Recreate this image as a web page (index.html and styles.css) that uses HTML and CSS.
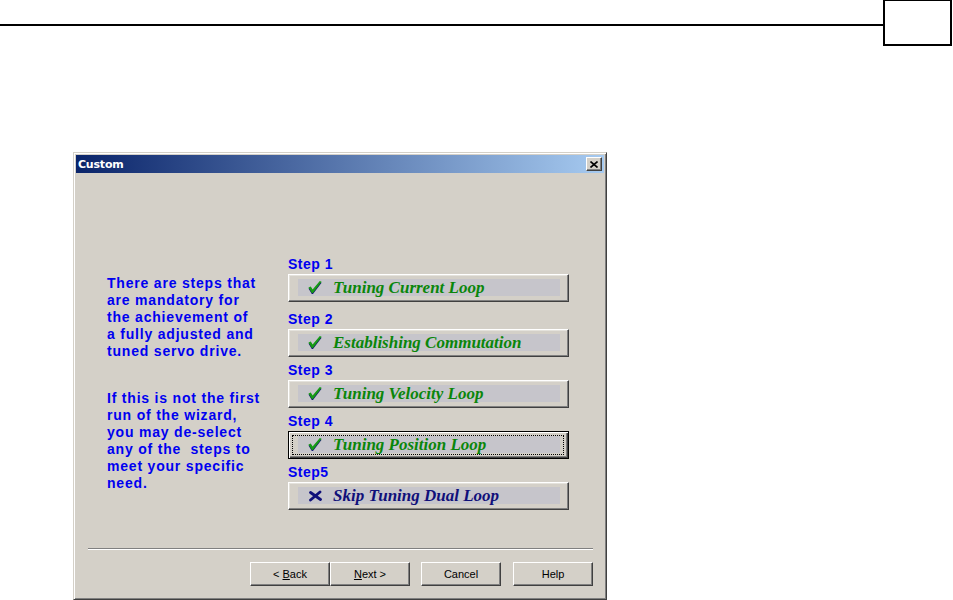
FILE: index.html
```html
<!DOCTYPE html>
<html lang="en">
<head>
    <meta charset="UTF-8">
    <title>Custom</title>
    <link rel="stylesheet" href="styles.css">
</head>
<body>
    <div class="page-head">
        <div class="rule"></div>
        <div class="page-box"></div>
    </div>

    <div class="dialog">
        <div class="titlebar">
            <span class="title">Custom</span>
            <span class="close-btn">
                <svg width="8" height="7" viewBox="0 0 8 7"><path d="M0.5 0.5 L7.5 6.5 M7.5 0.5 L0.5 6.5" stroke="#000" stroke-width="1.6"/></svg>
            </span>
        </div>

        <div class="dialog-body">
            <div class="intro">
                <p>There are steps that<br>are mandatory for<br>the achievement of<br>a fully adjusted and<br>tuned servo drive.</p>
                <p>If this is not the first<br>run of the wizard,<br>you may de-select<br>any of the &nbsp;steps to<br>meet your specific<br>need.</p>
            </div>

            <div class="steps">
                <div class="step">
                    <div class="step-label">Step 1</div>
                    <div class="step-btn">
                        <div class="step-face">
                            <svg class="check" width="14" height="13" viewBox="0 0 14 13"><path d="M0.5 7.5 L2.8 6.6 L4.6 9.4 L11.8 1 L13.6 1.8 L5 13 L3.8 13 Z" fill="#101870"/><path d="M0.5 6.5 L2.8 5.6 L4.6 8.4 L11.8 0 L13.6 0.8 L5 12 L3.8 12 Z" fill="#169a16"/></svg>
                            <span>Tuning Current Loop</span>
                        </div>
                    </div>
                </div>
                <div class="step">
                    <div class="step-label">Step 2</div>
                    <div class="step-btn">
                        <div class="step-face">
                            <svg class="check" width="14" height="13" viewBox="0 0 14 13"><path d="M0.5 7.5 L2.8 6.6 L4.6 9.4 L11.8 1 L13.6 1.8 L5 13 L3.8 13 Z" fill="#101870"/><path d="M0.5 6.5 L2.8 5.6 L4.6 8.4 L11.8 0 L13.6 0.8 L5 12 L3.8 12 Z" fill="#169a16"/></svg>
                            <span>Establishing Commutation</span>
                        </div>
                    </div>
                </div>
                <div class="step">
                    <div class="step-label">Step 3</div>
                    <div class="step-btn">
                        <div class="step-face">
                            <svg class="check" width="14" height="13" viewBox="0 0 14 13"><path d="M0.5 7.5 L2.8 6.6 L4.6 9.4 L11.8 1 L13.6 1.8 L5 13 L3.8 13 Z" fill="#101870"/><path d="M0.5 6.5 L2.8 5.6 L4.6 8.4 L11.8 0 L13.6 0.8 L5 12 L3.8 12 Z" fill="#169a16"/></svg>
                            <span>Tuning Velocity Loop</span>
                        </div>
                    </div>
                </div>
                <div class="step">
                    <div class="step-label">Step 4</div>
                    <div class="step-btn focused">
                        <div class="step-face">
                            <svg class="check" width="14" height="13" viewBox="0 0 14 13"><path d="M0.5 7.5 L2.8 6.6 L4.6 9.4 L11.8 1 L13.6 1.8 L5 13 L3.8 13 Z" fill="#101870"/><path d="M0.5 6.5 L2.8 5.6 L4.6 8.4 L11.8 0 L13.6 0.8 L5 12 L3.8 12 Z" fill="#169a16"/></svg>
                            <span>Tuning Position Loop</span>
                        </div>
                    </div>
                </div>
                <div class="step">
                    <div class="step-label">Step5</div>
                    <div class="step-btn">
                        <div class="step-face skip">
                            <svg class="check" width="14" height="13" viewBox="0 0 14 13"><path d="M2.5 3.5 L12.5 10.5 M12 3 L2.5 11" stroke="#10107a" stroke-width="2.8" stroke-linecap="round"/></svg>
                            <span>Skip Tuning Dual Loop</span>
                        </div>
                    </div>
                </div>
            </div>
        </div>

        <div class="separator"></div>

        <div class="actions">
            <button class="win-btn">&lt; <u>B</u>ack</button>
            <button class="win-btn"><u>N</u>ext &gt;</button>
            <button class="win-btn spaced">Cancel</button>
            <button class="win-btn spaced-wide">Help</button>
        </div>
    </div>
</body>
</html>
```

FILE: styles.css
```css
body {
    margin: 0;
    background: #fff;
    font-family: "Liberation Sans", Arial, sans-serif;
}
.page-head {
    display: flex;
    height: 46px;
}
.rule {
    flex: 1;
    height: 2px;
    margin-top: 24px;
    background: #000;
}
.page-box {
    width: 65px;
    height: 43px;
    margin-right: 1px;
    border: 2px solid #000;
    border-top-width: 1px;
}
.dialog {
    width: 534px;
    height: 448px;
    margin: 106px 0 0 73px;
    box-sizing: border-box;
    padding: 2px;
    background: #d4d0c8;
    border: 1px solid;
    border-color: #d4d0c8 #404040 #404040 #d4d0c8;
    box-shadow: inset 1px 1px #fff, inset -1px -1px #808080;
}
.titlebar {
    height: 18px;
    display: flex;
    align-items: center;
    justify-content: space-between;
    padding: 0 2px 0 2px;
    background: linear-gradient(to right, #0a246a, #a6caf0);
}
.title {
    color: #fff;
    font-family: "DejaVu Sans", sans-serif;
    font-weight: bold;
    font-size: 11px;
    letter-spacing: -0.2px;
}
.close-btn {
    width: 16px;
    height: 14px;
    box-sizing: border-box;
    display: flex;
    align-items: center;
    justify-content: center;
    background: #d4d0c8;
    border: 1px solid;
    border-color: #fff #404040 #404040 #fff;
    box-shadow: inset -1px -1px #808080;
}
.dialog-body {
    display: flex;
    padding: 83px 0 0 31px;
}
.intro {
    width: 181px;
    padding-top: 19px;
    color: #0000f0;
    font-weight: bold;
    font-size: 14px;
    line-height: 17px;
    letter-spacing: 0.8px;
}
.intro p {
    margin: 0 0 30px 0;
}
.intro p:last-child {
    margin-bottom: 0;
}
.steps {
    width: 281px;
}
.step {
    margin-bottom: 5px;
}
.step:first-child {
    margin-bottom: 9px;
}
.step-label {
    color: #0000f0;
    font-weight: bold;
    font-size: 14px;
    line-height: 17px;
    letter-spacing: 0.5px;
    margin-bottom: 1px;
}
.step-btn {
    position: relative;
    height: 28px;
    box-sizing: border-box;
    padding: 4px 8px 5px 9px;
    border: 1px solid;
    border-color: #fff #404040 #404040 #fff;
    box-shadow: inset -1px -1px #808080, inset 1px 1px #e4e2dc;
}
.step-btn.focused {
    border-color: #000;
    box-shadow: inset 1px 1px #fff, inset -1px -1px #404040, inset -2px -2px #808080;
}
.step-btn.focused::before {
    content: "";
    position: absolute;
    top: 3px;
    left: 3px;
    right: 4px;
    bottom: 3px;
    border: 1px dotted #000;
}
.step-face {
    height: 17px;
    display: flex;
    align-items: center;
    background: #c6c5cb;
    color: #0a860a;
    font-family: "Liberation Serif", "Times New Roman", serif;
    font-weight: bold;
    font-style: italic;
    font-size: 17px;
}
.step-face.skip {
    color: #10107a;
}
.check {
    margin-left: 10px;
    margin-right: 11px;
    flex-shrink: 0;
}
.separator {
    margin: 33px 11px 0 12px;
    border-top: 1px solid #808080;
    border-bottom: 1px solid #fff;
}
.actions {
    display: flex;
    justify-content: flex-end;
    padding: 12px 11px 0 0;
}
.win-btn {
    width: 80px;
    height: 24px;
    margin: 0;
    padding: 0;
    background: #d4d0c8;
    font-family: "Liberation Sans", Arial, sans-serif;
    font-size: 11px;
    color: #000;
    border: 1px solid;
    border-color: #fff #404040 #404040 #fff;
    box-shadow: inset -1px -1px #808080;
}
.win-btn.spaced {
    margin-left: 11px;
}
.win-btn.spaced-wide {
    margin-left: 12px;
}
```
